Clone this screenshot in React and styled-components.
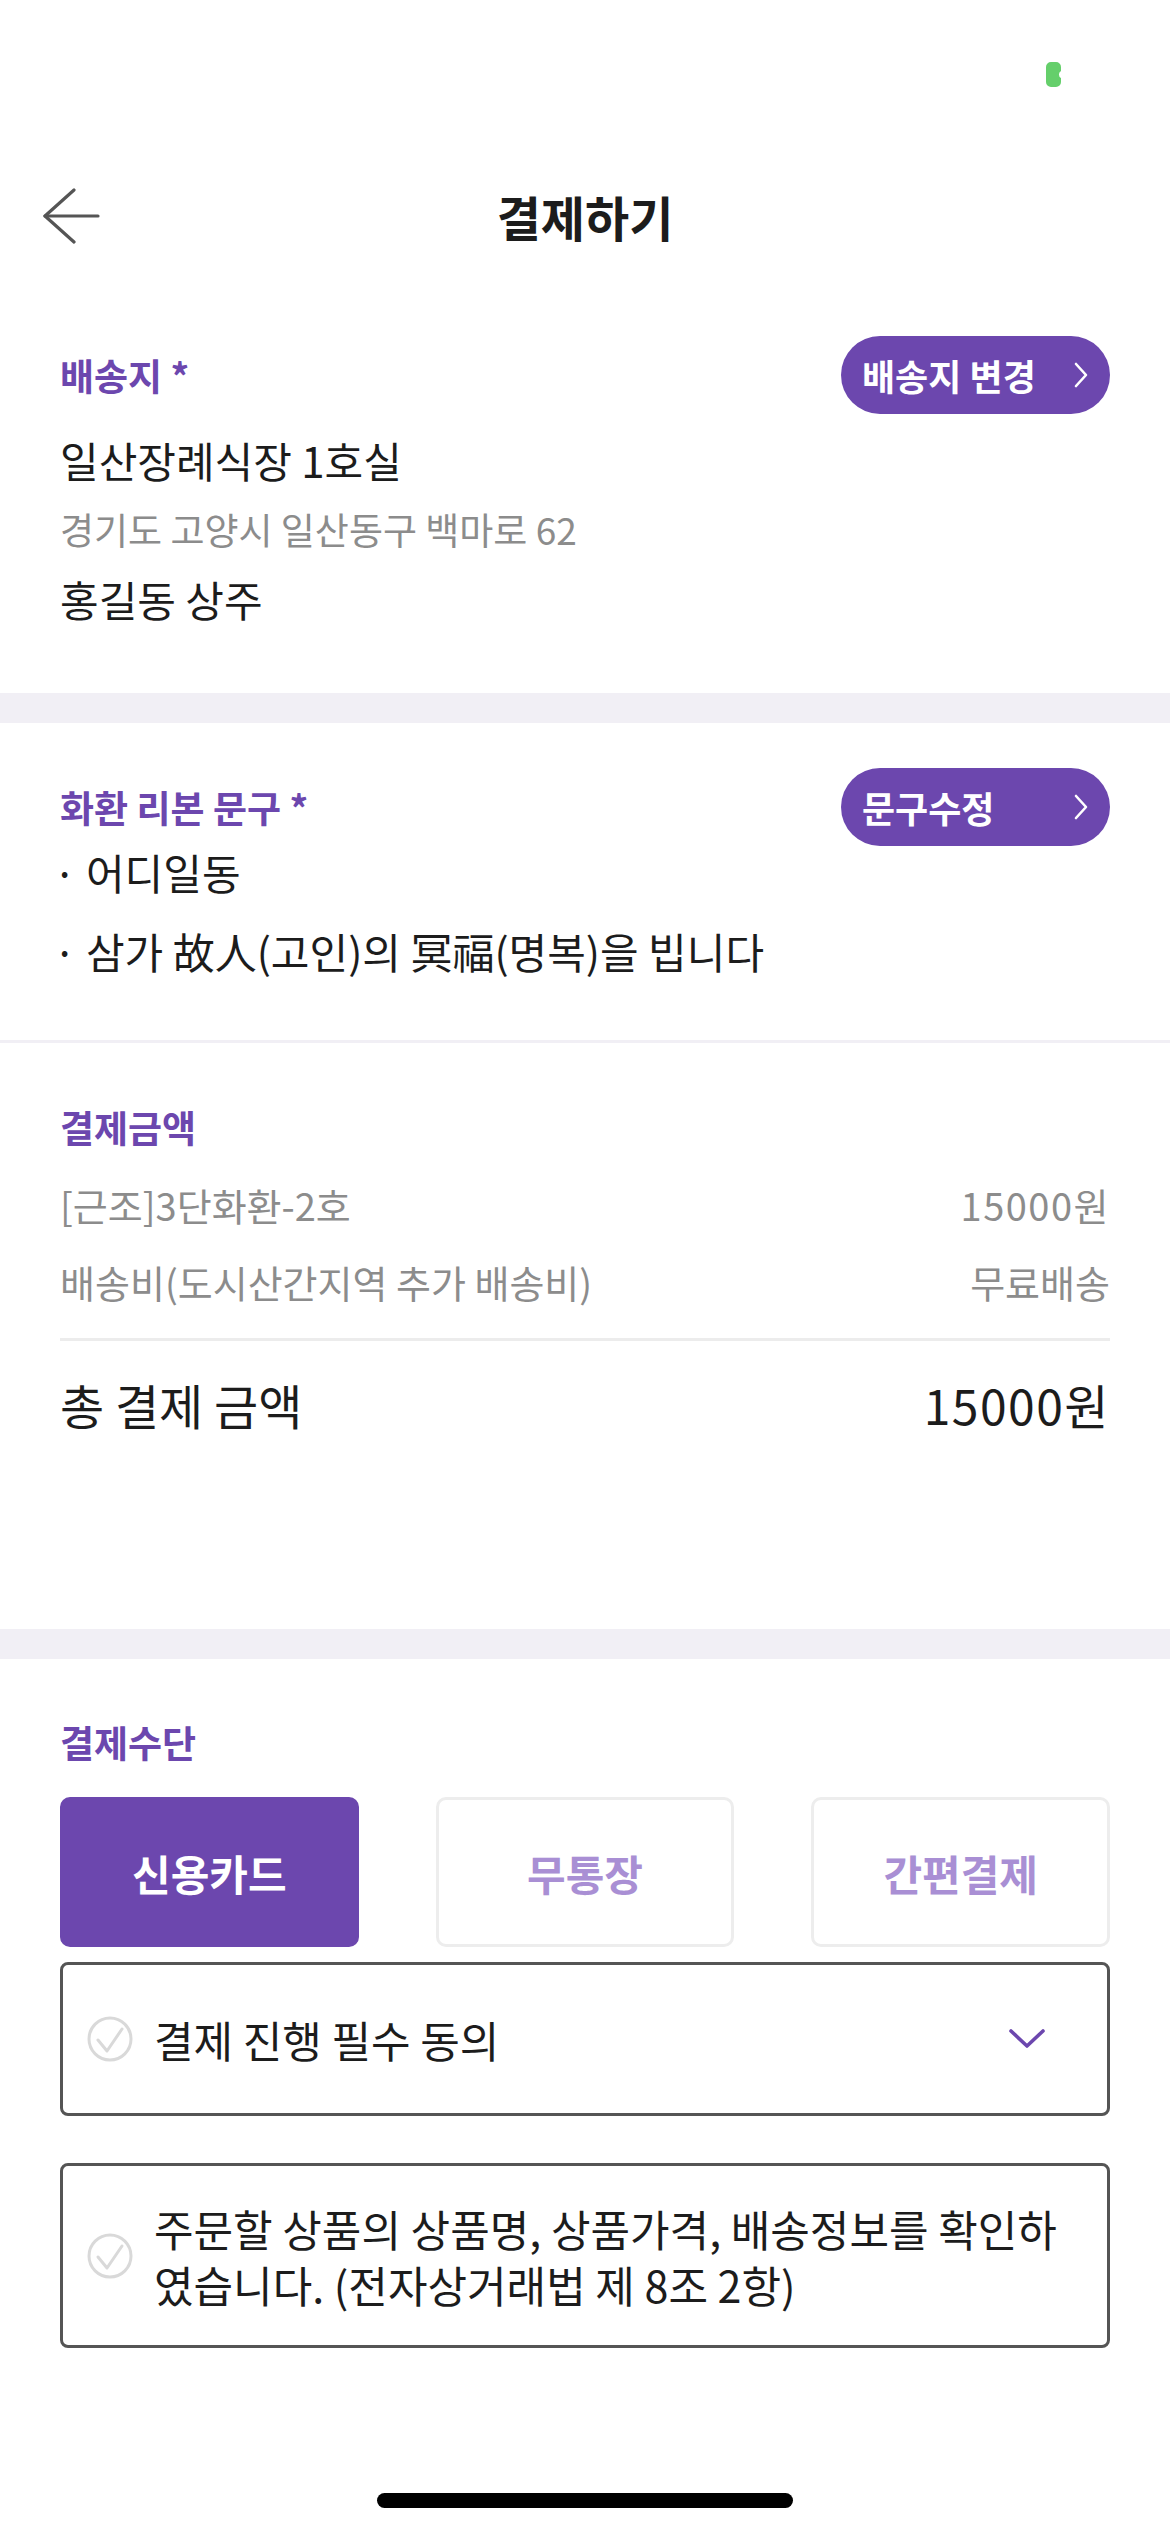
import React from "react";
import styled, { createGlobalStyle } from "styled-components";

const PURPLE = "#6c47ae";
const LIGHT_PURPLE = "#a98fd4";
const GRAY = "#8c8c8c";
const INK = "#1c1c1c";
const BAND = "#f1eff5";

const GlobalStyle = createGlobalStyle`
  html, body {
    margin: 0;
    padding: 0;
    background: #ffffff;
  }
  body {
    font-family: "Noto Sans CJK KR", "Noto Sans", sans-serif;
    color: ${INK};
  }
  * {
    box-sizing: border-box;
  }
`;

const Page = styled.div`
  width: 1170px;
  min-height: 2532px;
  display: flex;
  flex-direction: column;
  background: #ffffff;
`;

const StatusBar = styled.div`
  height: 130px;
  display: flex;
  justify-content: flex-end;
  align-items: flex-start;
  padding: 62px 109px 0 0;
`;

const Header = styled.header`
  height: 172px;
  display: grid;
  grid-template-columns: 1fr auto 1fr;
  align-items: center;
  padding: 0 42px;
`;

const BackButton = styled.button`
  justify-self: start;
  border: none;
  background: none;
  padding: 0;
  display: flex;
  cursor: pointer;
`;

const Title = styled.h1`
  margin: 0;
  font-size: 48px;
  font-weight: 700;
  line-height: 60px;
  color: ${INK};
`;

const Section = styled.section`
  padding: ${(p) => p.$pad};
  border-bottom: ${(p) => p.$divider || "none"};
`;

const Band = styled.div`
  height: 30px;
  background: ${BAND};
`;

const HeadRow = styled.div`
  height: 78px;
  display: flex;
  justify-content: space-between;
  align-items: center;
`;

const Label = styled.h2`
  margin: 0;
  font-size: 37px;
  font-weight: 700;
  color: ${PURPLE};
  line-height: 50px;
`;

const PillButton = styled.button`
  width: 269px;
  height: 78px;
  border: none;
  border-radius: 39px;
  background: ${PURPLE};
  color: #ffffff;
  font-family: inherit;
  font-size: 36px;
  font-weight: 700;
  display: flex;
  align-items: center;
  justify-content: space-between;
  padding: 0 22px 0 21px;
`;

const Lines = styled.div`
  margin-top: ${(p) => p.$top || 0}px;
  display: flex;
  flex-direction: column;
  gap: ${(p) => p.$gap || 0}px;
`;

const Line = styled.p`
  margin: 0;
  font-size: ${(p) => p.$size || 42}px;
  line-height: ${(p) => p.$lh || 70}px;
  color: ${(p) => (p.$muted ? GRAY : INK)};
`;

const Bullet = styled.span`
  margin-left: -7px;
`;

const PriceRow = styled.div`
  display: flex;
  justify-content: space-between;
  align-items: center;
  font-size: ${(p) => (p.$total ? 48 : 38)}px;
  line-height: ${(p) => (p.$total ? 60 : 77)}px;
  color: ${(p) => (p.$total ? INK : GRAY)};
  margin-top: ${(p) => p.$top || 0}px;
`;

const Amount = styled.span`
  letter-spacing: 1.5px;
`;

const Rule = styled.div`
  height: 3px;
  background: #ececec;
  margin-top: 18px;
`;

const Tabs = styled.div`
  margin-top: 30px;
  display: grid;
  grid-template-columns: repeat(3, 1fr);
  gap: 77px;
`;

const Tab = styled.button`
  height: 150px;
  border-radius: 10px;
  border: 3px solid ${(p) => (p.$active ? PURPLE : "#ededed")};
  background: ${(p) => (p.$active ? PURPLE : "#ffffff")};
  color: ${(p) => (p.$active ? "#ffffff" : LIGHT_PURPLE)};
  font-family: inherit;
  font-size: 42px;
  font-weight: 700;
`;

const AgreeBox = styled.div`
  margin-top: ${(p) => p.$top}px;
  min-height: ${(p) => p.$height}px;
  border: 3px solid #555555;
  border-radius: 8px;
  display: flex;
  align-items: center;
  gap: 21px;
  padding: 0 ${(p) => p.$right}px 0 24px;
`;

const AgreeText = styled.p`
  margin: 0;
  flex: 1;
  font-size: 43px;
  line-height: 56px;
  color: ${INK};
`;

const Footer = styled.div`
  padding: 145px 0 24px;
  display: flex;
  justify-content: center;
`;

const HomeIndicator = styled.div`
  width: 416px;
  height: 15px;
  border-radius: 8px;
  background: #000000;
`;

const Battery = () => (
  <svg width="15" height="25" viewBox="0 0 15 25">
    <path d="M5 0 H10 A5 5 0 0 1 15 5 V9 A4 4 0 0 0 15 16 V20 A5 5 0 0 1 10 25 H5 A5 5 0 0 1 0 20 V5 A5 5 0 0 1 5 0 Z" fill="#65cf6b" />
  </svg>
);

const BackArrow = () => (
  <svg width="60" height="56" viewBox="0 0 60 56" fill="none" stroke="#555555" strokeWidth="3.2" strokeLinecap="round" strokeLinejoin="round">
    <path d="M32 2 L3 28 L32 54" />
    <path d="M3 28 H56" />
  </svg>
);

const ChevronRight = () => (
  <svg width="14" height="26" viewBox="0 0 14 26" fill="none" stroke="#ffffff" strokeWidth="2.6" strokeLinecap="round" strokeLinejoin="round">
    <path d="M2 2 L12 13 L2 24" />
  </svg>
);

const ChevronDown = () => (
  <svg width="36" height="20" viewBox="0 0 36 20" fill="none" stroke={PURPLE} strokeWidth="3.6" strokeLinecap="round" strokeLinejoin="round">
    <path d="M2 2 L18 17 L34 2" />
  </svg>
);

const CheckCircle = () => (
  <svg width="46" height="46" viewBox="0 0 46 46" fill="none" stroke="#d9d9d9" strokeWidth="3" strokeLinecap="round" strokeLinejoin="round" style={{ flexShrink: 0 }}>
    <circle cx="23" cy="23" r="21" />
    <path d="M11 24 L20 35 L35 13" />
  </svg>
);

const App = () => {
  const methods = ["신용카드", "무통장", "간편결제"];
  return (
    <>
      <GlobalStyle />
      <Page>
        <StatusBar>
          <Battery />
        </StatusBar>
        <Header>
          <BackButton aria-label="뒤로">
            <BackArrow />
          </BackButton>
          <Title>결제하기</Title>
          <span />
        </Header>

        <Section $pad="34px 60px 59px">
          <HeadRow>
            <Label>배송지 *</Label>
            <PillButton>
              배송지 변경
              <ChevronRight />
            </PillButton>
          </HeadRow>
          <Lines $top={12}>
            <Line $lh={68}>일산장례식장 1호실</Line>
            <Line $size={37} $muted>경기도 고양시 일산동구 백마로 62</Line>
            <Line>홍길동 상주</Line>
          </Lines>
        </Section>
        <Band />

        <Section $pad="45px 60px 63px" $divider={`3px solid ${BAND}`}>
          <HeadRow>
            <Label>화환 리본 문구 *</Label>
            <PillButton>
              문구수정
              <ChevronRight />
            </PillButton>
          </HeadRow>
          <Lines $gap={27}>
            <Line $lh={52}>
              <Bullet>·</Bullet> 어디일동
            </Line>
            <Line $lh={52}>
              <Bullet>·</Bullet> 삼가 故人(고인)의 冥福(명복)을 빕니다
            </Line>
          </Lines>
        </Section>

        <Section $pad="59px 60px 195px">
          <Label>결제금액</Label>
          <PriceRow $top={14}>
            <span>[근조]3단화환-2호</span>
            <Amount>15000원</Amount>
          </PriceRow>
          <PriceRow>
            <span>배송비(도시산간지역 추가 배송비)</span>
            <span>무료배송</span>
          </PriceRow>
          <Rule />
          <PriceRow $total $top={33}>
            <span>총 결제 금액</span>
            <Amount>15000원</Amount>
          </PriceRow>
        </Section>
        <Band />

        <Section $pad="58px 60px 0">
          <Label>결제수단</Label>
          <Tabs>
            {methods.map((m, i) => (
              <Tab key={m} $active={i === 0}>
                {m}
              </Tab>
            ))}
          </Tabs>
          <AgreeBox $top={15} $height={154} $right={62}>
            <CheckCircle />
            <AgreeText>결제 진행 필수 동의</AgreeText>
            <ChevronDown />
          </AgreeBox>
          <AgreeBox $top={47} $height={185} $right={22}>
            <CheckCircle />
            <AgreeText>
              주문할 상품의 상품명, 상품가격, 배송정보를 확인하였습니다. (전자상거래법 제 8조 2항)
            </AgreeText>
          </AgreeBox>
        </Section>

        <Footer>
          <HomeIndicator />
        </Footer>
      </Page>
    </>
  );
};

export default App;
